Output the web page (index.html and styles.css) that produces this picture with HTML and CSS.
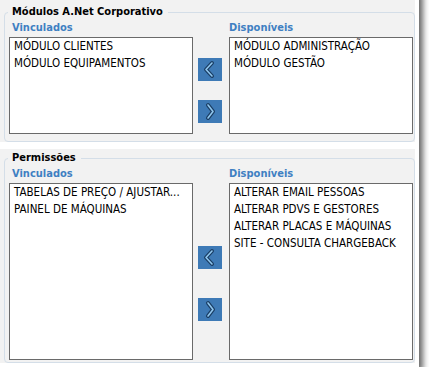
FILE: index.html
```html
<!DOCTYPE html>
<html>
<head>
<meta charset="UTF-8">
<title>Permissões</title>
<link rel="stylesheet" href="styles.css">
</head>
<body>
<div class="window">

	<!-- módulos -->
	<div class="section mods">
		<fieldset>
			<legend>Módulos A.Net Corporativo</legend>
			<div class="row">
				<div class="col">
					<div class="label left">Vinculados</div>
					<ul class="list">
						<li>MÓDULO CLIENTES</li>
						<li>MÓDULO EQUIPAMENTOS</li>
					</ul>
				</div>
				<div class="btns">
					<button class="btn"><svg width="24" height="23" viewBox="0 0 24 23"><polyline class="out" points="14,5 8,11.5 14,18"/><polyline class="in" points="14,5 8,11.5 14,18"/></svg></button>
					<button class="btn"><svg width="24" height="23" viewBox="0 0 24 23"><polyline class="out" points="10,5 15,11.5 10,18"/><polyline class="in" points="10,5 15,11.5 10,18"/></svg></button>
				</div>
				<div class="col">
					<div class="label">Disponíveis</div>
					<ul class="list">
						<li>MÓDULO ADMINISTRAÇÃO</li>
						<li>MÓDULO GESTÃO</li>
					</ul>
				</div>
			</div>
		</fieldset>
	</div>

	<!-- permissões -->
	<div class="section perms">
		<fieldset>
			<legend>Permissões</legend>
			<div class="row">
				<div class="col">
					<div class="label left">Vinculados</div>
					<ul class="list">
						<li>TABELAS DE PREÇO / AJUSTAR...</li>
						<li>PAINEL DE MÁQUINAS</li>
					</ul>
				</div>
				<div class="btns">
					<button class="btn"><svg width="24" height="23" viewBox="0 0 24 23"><polyline class="out" points="14,5 8,11.5 14,18"/><polyline class="in" points="14,5 8,11.5 14,18"/></svg></button>
					<button class="btn"><svg width="24" height="23" viewBox="0 0 24 23"><polyline class="out" points="10,5 15,11.5 10,18"/><polyline class="in" points="10,5 15,11.5 10,18"/></svg></button>
				</div>
				<div class="col">
					<div class="label">Disponíveis</div>
					<ul class="list">
						<li>ALTERAR EMAIL PESSOAS</li>
						<li>ALTERAR PDVS E GESTORES</li>
						<li>ALTERAR PLACAS E MÁQUINAS</li>
						<li>SITE - CONSULTA CHARGEBACK</li>
					</ul>
				</div>
			</div>
		</fieldset>
	</div>

</div>
</body>
</html>
```
FILE: styles.css
```css
body{
	margin: 0;
	background: #fff;
	font-family: "DejaVu Sans Condensed", "DejaVu Sans", sans-serif;
	font-size: 11.5px;
	color: #000;
}
.window{
	box-sizing: border-box;
	width: 429px;
	height: 377px;
	margin: -10px 0 0 -10px;
	padding: 10px 0 0 10px;
	background: #fff;
	box-shadow: 4px 4px 6px rgba(0,0,0,0.6);
}

.section{
	width: 415px;
	box-sizing: border-box;
	padding-left: 4px;
	background: #f2f2f2;
}
.mods{
	padding-top: 5px;
}
.perms{
	margin-top: 7px;
	padding-top: 2px;
}

fieldset{
	margin: 0;
	padding: 2px 1px 7px 4px;
	border: 1px solid #d4dee8;
	border-radius: 4px;
}
.perms fieldset{
	padding-bottom: 2px;
}
legend{
	padding: 0 5px 0 4px;
	margin-left: -1px;
	font-weight: bold;
	font-size: 11px;
	line-height: 14px;
}

.row{
	display: flex;
}
.col{
	width: 184px;
}
.label{
	color: #3f80c2;
	font-weight: bold;
	font-size: 11px;
	line-height: 14px;
	margin-bottom: 2px;
}
.label.left{
	padding-left: 3px;
}

/* listas */
.list{
	margin: 0;
	padding: 0 4px;
	list-style: none;
	background: #fff;
	border: 1px solid #6a6a6a;
	box-sizing: border-box;
	height: 97px;
}
.perms .list{
	height: 177px;
}
.list li{
	line-height: 17px;
	white-space: nowrap;
}

/* botões */
.btns{
	display: flex;
	flex-direction: column;
	margin: 0 7px 0 5px;
	padding-top: 37px;
	gap: 19px;
}
.perms .btns{
	padding-top: 79px;
	gap: 29px;
}
.btn{
	width: 24px;
	height: 23px;
	padding: 0;
	border: 0;
	background: #3e7ab6;
	display: block;
}
.btn svg{
	display: block;
}
.out{
	fill: none;
	stroke: #1a3d63;
	stroke-width: 4;
	stroke-linecap: round;
	stroke-linejoin: round;
}
.in{
	fill: none;
	stroke: #8fc6ee;
	stroke-width: 1.6;
	stroke-linecap: round;
	stroke-linejoin: round;
}
```
